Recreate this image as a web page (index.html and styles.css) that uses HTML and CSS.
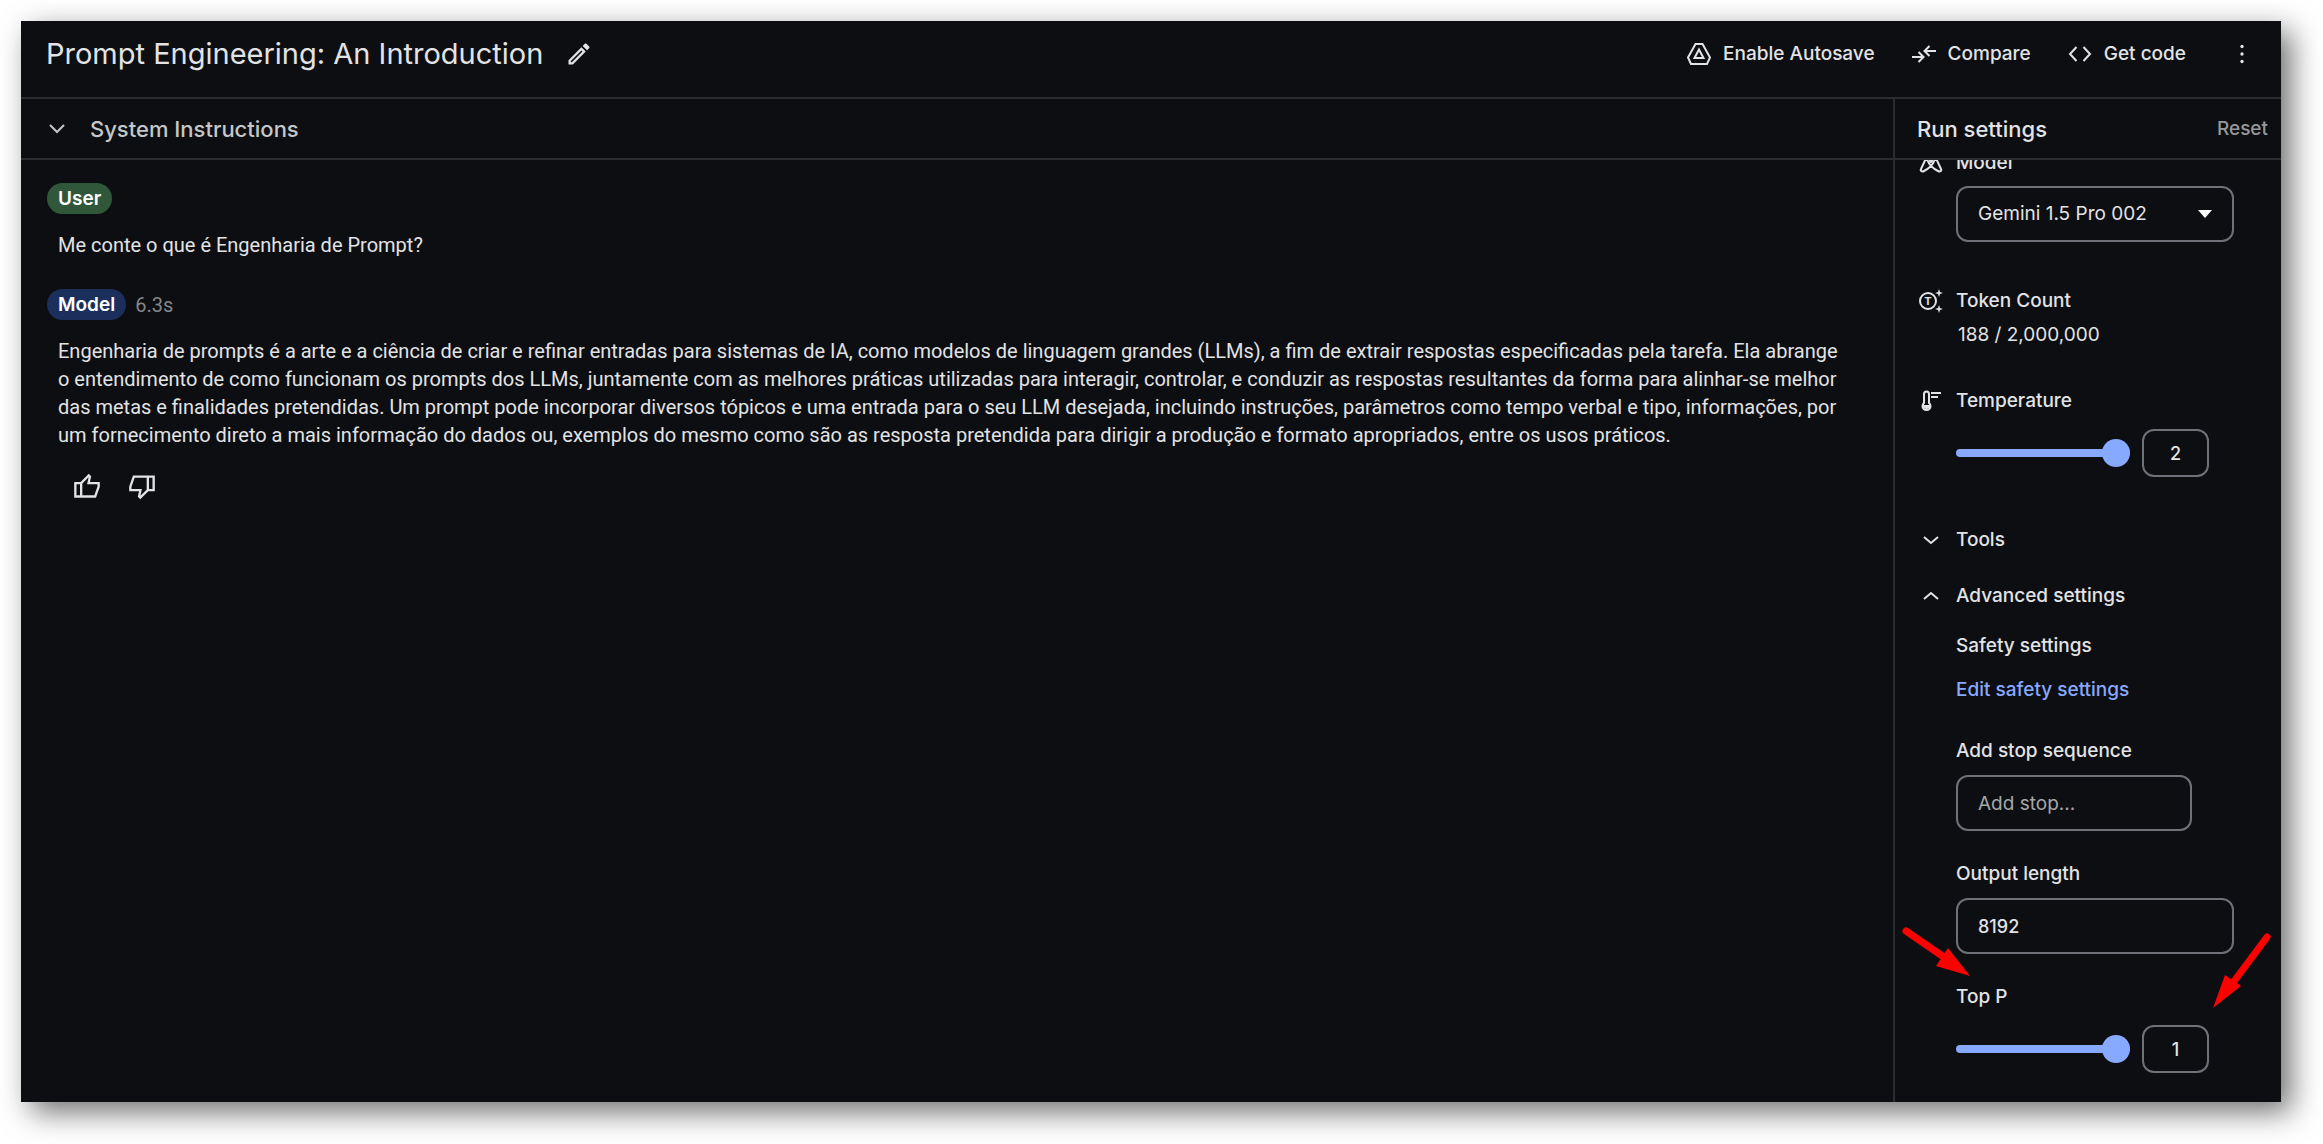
FILE: index.html
```
<!DOCTYPE html>
<html lang="pt-BR">
<head>
<meta charset="UTF-8">
<title>Prompt Engineering: An Introduction</title>
<link rel="stylesheet" href="styles.css">
</head>
<body>
<div class="window">
    <header class="topbar">
        <h1>Prompt Engineering: An Introduction</h1>
        <button class="edit" aria-label="Edit title">
            <svg class="icon-large fill" viewBox="0 0 24 24"><path d="M14.06 9.02l.92.92L5.92 19H5v-.92l9.06-9.06M17.66 3c-.25 0-.51.1-.7.29l-1.83 1.83 3.75 3.75 1.83-1.83c.39-.39.39-1.02 0-1.41l-2.34-2.34c-.2-.2-.45-.29-.71-.29zm-3.6 3.19L3 17.25V21h3.75L17.81 9.94l-3.75-3.75z"/></svg>
        </button>
        <div class="actions">
            <button>
                <svg class="icon" viewBox="0 0 24 24"><path d="M8.500 2h7L23 15.500l-3 6.500H4l-3-6.500zM12 7.500l4.500 8.500h-9z"/></svg>
                Enable Autosave
            </button>
            <button>
                <svg class="icon" viewBox="0 0 24 24"><path d="M0 15h11M6.500 10l5 5-5 5M24 9H13M17.500 4l-5 5 5 5"/></svg>
                Compare
            </button>
            <button>
                <svg class="icon" viewBox="0 0 24 24"><path d="M8.500 5 2 12l6.500 7M15.500 5 22 12l-6.500 7"/></svg>
                Get code
            </button>
            <button class="more" aria-label="More options">
                <svg class="icon fill" viewBox="0 0 24 24"><circle cx="12" cy="3" r="2"/><circle cx="12" cy="12" r="2"/><circle cx="12" cy="21" r="2"/></svg>
            </button>
        </div>
    </header>

    <div class="columns">
        <main>
            <button class="bar system">
                <svg class="icon" viewBox="0 0 24 24"><path d="M5 8l7 7 7-7"/></svg>
                System Instructions
            </button>
            <div class="chat">
                <div class="turn-head"><span class="chip user">User</span></div>
                <p>Me conte o que é Engenharia de Prompt?</p>
                <div class="turn-head"><span class="chip model">Model</span><span class="time">6.3s</span></div>
                <p>Engenharia de prompts é a arte e a ciência de criar e refinar entradas para sistemas de IA, como modelos de linguagem grandes (LLMs), a fim de extrair respostas especificadas pela tarefa. Ela abrange o entendimento de como funcionam os prompts dos LLMs, juntamente com as melhores práticas utilizadas para interagir, controlar, e conduzir as respostas resultantes da forma para alinhar-se melhor das metas e finalidades pretendidas. Um prompt pode incorporar diversos tópicos e uma entrada para o seu LLM desejada, incluindo instruções, parâmetros como tempo verbal e tipo, informações, por um fornecimento direto a mais informação do dados ou, exemplos do mesmo como são as resposta pretendida para dirigir a produção e formato apropriados, entre os usos práticos.</p>
                <div class="feedback">
                    <button aria-label="Good response">
                        <svg class="icon-large" viewBox="0 0 24 24"><path d="M2 9.500h5L13.500 3l1 1-1.200 5.500H22v3L19 21H2zM7 9.500V21"/></svg>
                    </button>
                    <button aria-label="Bad response">
                        <svg class="icon-large" viewBox="0 0 24 24"><path d="M22 15.500h-5L10.500 22l-1-1 1.200-5.500H2v-3L5 4h17zM17 15.500V4"/></svg>
                    </button>
                </div>
            </div>
        </main>

        <aside>
            <div class="bar">
                <h2>Run settings</h2>
                <button class="reset">Reset</button>
            </div>
            <div class="scroller">
                <div class="settings">
                    <section>
                        <label class="heading" for="model">
                            <svg class="icon" viewBox="0 0 24 24"><path d="M9 3c1-2 5-2 6 0l7 15c1 2-1 3-3 2-6-3-9-6-11-12M16 8c-2 6-5 9-11 12-2 1-4 0-3-2L9 3"/><circle cx="12" cy="10" r="1"/></svg>
                            Model
                        </label>
                        <div class="select indent">
                            <select id="model"><option>Gemini 1.5 Pro 002</option></select>
                            <svg class="caret" viewBox="0 0 14 8"><path d="M0 0h14L7 8z"/></svg>
                        </div>
                    </section>
                    <section>
                        <div class="heading">
                            <svg class="icon token" viewBox="0 0 24 24"><circle cx="9" cy="12" r="8"/><text x="9" y="16" text-anchor="middle">T</text><path class="spark" d="M20 0l1 3 3 1-3 1-1 3-1-3-3-1 3-1zM20 16l1 3 3 1-3 1-1 3-1-3-3-1 3-1z"/></svg>
                            Token Count
                        </div>
                        <div class="count indent">188 / 2,000,000</div>
                    </section>
                    <section>
                        <label class="heading" for="temperature">
                            <svg class="icon" viewBox="0 0 24 24"><path d="M5 5a2 2 0 0 1 5 0v9a4 4 0 1 1-5 0z"/><path class="spark" d="M3.500 16h8a4 4 0 1 1-8 0z"/><path d="M12 4h10M12 8h7"/></svg>
                            Temperature
                        </label>
                        <div class="slider indent">
                            <input type="range" id="temperature" min="0" max="2" step="0.05" value="2">
                            <input type="text" class="value" aria-label="Temperature value" value="2">
                        </div>
                    </section>
                    <button class="heading tools">
                        <svg class="icon" viewBox="0 0 24 24"><path d="M5 9l7 6 7-6"/></svg>
                        Tools
                    </button>
                    <button class="heading advanced">
                        <svg class="icon" viewBox="0 0 24 24"><path d="M5 15l7-6 7 6"/></svg>
                        Advanced settings
                    </button>
                    <div class="advanced-body indent">
                        <div class="safety">Safety settings</div>
                        <a href="#safety">Edit safety settings</a>
                        <label for="stop">Add stop sequence</label>
                        <input type="text" id="stop" class="box short" placeholder="Add stop...">
                        <label for="length">Output length</label>
                        <input type="text" id="length" class="box" value="8192">
                        <div class="top-p">
                            <label for="topp">Top P</label>
                            <div class="slider">
                                <input type="range" id="topp" min="0" max="1" step="0.05" value="1">
                                <input type="text" class="value" aria-label="Top P value" value="1">
                            </div>
                            <!-- red marker arrows -->
                            <svg class="arrow left" viewBox="0 0 70 52"><path d="M5 5L50 36"/><path class="head" d="M47 22L69 50 35 40z"/></svg>
                            <svg class="arrow right" viewBox="0 0 60 78"><path d="M55 5L20 52"/><path class="head" d="M13 43L29 54 1 76z"/></svg>
                        </div>
                    </div>
                </div>
            </div>
        </aside>
    </div>
</div>
</body>
</html>
```
FILE: styles.css
```
* {
    box-sizing: border-box;
}

html {
    background: #fff;
}

body {
    margin: 0;
    padding: 21px 42px 42px 21px;
    color: #e2e3e5;
    font: 500 19px/28px Inter, "Liberation Sans", sans-serif;
}

h1, h2, p {
    margin: 0;
}

button {
    display: flex;
    align-items: center;
    padding: 0;
    border: 0;
    background: none;
    color: inherit;
    font: inherit;
    cursor: pointer;
}

svg {
    flex: none;
    fill: none;
    stroke: currentColor;
    stroke-width: 2;
}

.icon {
    width: 24px;
    height: 24px;
}

.icon-large {
    width: 28px;
    height: 28px;
}

.fill, .spark {
    fill: currentColor;
    stroke: none;
}

.window {
    display: flex;
    flex-direction: column;
    min-height: calc(100vh - 63px);
    background: #0d0e11;
    box-shadow: 10px 10px 28px 0 #00000090;
}

/* top bar */

.topbar {
    display: flex;
    align-items: center;
    height: 78px;
    padding: 0 27px 10px 25px;
    border-bottom: 2px solid #2a2c2f;
}

h1 {
    font-size: 29px;
    font-weight: 400;
}

.edit {
    margin-left: 22px;
}

.actions {
    display: flex;
    gap: 37px;
    margin-left: auto;
}

.actions button {
    gap: 12px;
}

.actions .more {
    margin-left: 7px;
}

.more .icon {
    height: 20px;
}

/* columns */

.columns {
    display: flex;
    flex: 1;
}

main {
    flex: 1;
    min-width: 0;
}

aside {
    width: 388px;
    border-left: 2px solid #2a2c2f;
}

.bar {
    display: flex;
    align-items: center;
    width: 100%;
    height: 61px;
    padding: 0 13px 0 22px;
    border-bottom: 2px solid #2a2c2f;
}

.system {
    gap: 21px;
    color: #c4c7c8;
    font-size: 22px;
    padding-left: 24px;
}

h2 {
    font-size: 22px;
    font-weight: 500;
}

.reset {
    margin-left: auto;
    color: #96989b;
}

/* chat */

.chat {
    padding: 23px 48px 24px 26px;
}

.chat p {
    margin: 17px 0 30px 11px;
    font: 400 20px/28px Roboto, "Liberation Sans", sans-serif;
}

.turn-head {
    display: flex;
    align-items: center;
    gap: 9px;
}

.chip {
    padding: 0 11px;
    border-radius: 16px;
    color: #fff;
    font-size: 19px;
    font-weight: 600;
    line-height: 31px;
}

.user {
    background: #31573b;
}

.model {
    background: #1b2f5c;
}

.time {
    color: #85878a;
    font: 400 20px/28px Roboto, "Liberation Sans", sans-serif;
}

.feedback {
    display: flex;
    gap: 27px;
    margin: -7px 0 0 26px;
}

/* run settings */

.scroller {
    overflow: hidden;
}

/* the list is scrolled a little way up under the bar */
.settings {
    margin-top: -11px;
    padding: 0 47px 28px 24px;
}

.settings section {
    margin-bottom: 45px;
}

.heading {
    display: flex;
    align-items: center;
    gap: 13px;
}

.indent {
    margin-left: 37px;
}

.select {
    position: relative;
    margin-top: 9px;
}

select, .box {
    display: block;
    width: 100%;
    height: 56px;
    padding: 0 20px;
    border: 2px solid #6f7178;
    border-radius: 12px;
    background: transparent;
    color: inherit;
    font: inherit;
    appearance: none;
}

select {
    font-weight: 400;
}

.caret {
    position: absolute;
    top: 24px;
    right: 22px;
    width: 14px;
    height: 8px;
    fill: #fff;
    stroke: none;
}

.token text {
    fill: currentColor;
    stroke: none;
    font-size: 11px;
    font-weight: 700;
}

.count {
    padding: 6px 0 0 2px;
    font-weight: 400;
}

.settings section:nth-of-type(2) {
    margin-bottom: 38px;
}

.slider {
    display: flex;
    align-items: center;
    gap: 12px;
    margin-top: 14px;
}

input[type="range"] {
    width: 174px;
    height: 28px;
    margin: 0;
    background: none;
    appearance: none;
}

input[type="range"]::-webkit-slider-runnable-track {
    height: 8px;
    border-radius: 4px;
    background: #87a9ff;
}

input[type="range"]::-webkit-slider-thumb {
    width: 28px;
    height: 28px;
    margin-top: -10px;
    border-radius: 50%;
    background: #87a9ff;
    appearance: none;
}

.value {
    width: 67px;
    height: 48px;
    padding: 0;
    border: 2px solid #6f7178;
    border-radius: 12px;
    background: transparent;
    color: inherit;
    font: inherit;
    font-size: 18px;
    text-align: center;
}

.tools {
    margin: 49px 0 28px;
}

.advanced-body {
    display: flex;
    flex-direction: column;
    margin-top: 22px;
}

.advanced-body a {
    margin: 16px 0 33px;
    color: #87a9ff;
    text-decoration: none;
}

.box {
    margin: 10px 0 29px;
    font-size: 18px;
}

.short {
    width: 236px;
    font-size: 19px;
    font-weight: 400;
}

.box::placeholder {
    color: #a5a7aa;
}

.top-p {
    position: relative;
}

.arrow {
    position: absolute;
    stroke: #f00;
    stroke-width: 7;
    stroke-linecap: round;
}

.arrow .head {
    fill: #f00;
    stroke: none;
}

.arrow.left {
    top: -57px;
    left: -55px;
    width: 70px;
    height: 52px;
}

.arrow.right {
    top: -51px;
    right: -38px;
    width: 60px;
    height: 78px;
}
```
